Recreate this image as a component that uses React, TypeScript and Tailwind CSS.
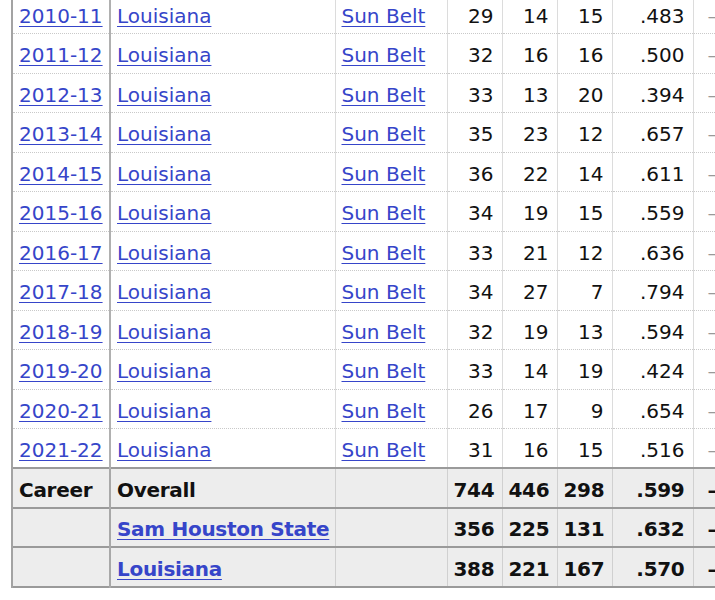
const seasons = [
  ['2010-11', 29, 14, 15, '.483'],
  ['2011-12', 32, 16, 16, '.500'],
  ['2012-13', 33, 13, 20, '.394'],
  ['2013-14', 35, 23, 12, '.657'],
  ['2014-15', 36, 22, 14, '.611'],
  ['2015-16', 34, 19, 15, '.559'],
  ['2016-17', 33, 21, 12, '.636'],
  ['2017-18', 34, 27, 7, '.794'],
  ['2018-19', 32, 19, 13, '.594'],
  ['2019-20', 33, 14, 19, '.424'],
  ['2020-21', 26, 17, 9, '.654'],
  ['2021-22', 31, 16, 15, '.516'],
] as const;

const career = [
  { label: 'Career', team: 'Overall', link: false, g: 744, w: 446, l: 298, pct: '.599' },
  { label: '', team: 'Sam Houston State', link: true, g: 356, w: 225, l: 131, pct: '.632' },
  { label: '', team: 'Louisiana', link: true, g: 388, w: 221, l: 167, pct: '.570' },
];

const link = 'text-[#3645c9] underline underline-offset-[3px] decoration-1';
const td = 'h-[39.5px] px-[6px] pt-[4px] pb-0 align-middle whitespace-nowrap';
const num = 'text-right pr-[8px]';

export default function App() {
  return (
    <div className="w-[715px] h-[600px] overflow-hidden bg-white font-['DejaVu_Sans',Verdana,sans-serif] text-[20px] text-[#111]">
      <table className="-mt-[6px] ml-[11px] table-fixed border-collapse w-[861px] leading-[24px]">
        <colgroup>
          <col className="w-[98px]" />
          <col className="w-[225px]" />
          <col className="w-[112px]" />
          <col className="w-[55px]" />
          <col className="w-[55px]" />
          <col className="w-[55px]" />
          <col className="w-[81px]" />
          <col className="w-[180px]" />
        </colgroup>
        <tbody>
          {seasons.map(([year, g, w, l, pct]) => (
            <tr key={year} className="border-b border-dotted border-[#c9c9c9]">
              <td className={`${td} border-l-2 border-l-[#a3a3a3] border-r-2 border-r-[#b0b0b0]`}>
                <a className={link}>{year}</a>
              </td>
              <td className={`${td} border-r border-r-[#dcdcdc]`}>
                <a className={link}>Louisiana</a>
              </td>
              <td className={`${td} border-r border-r-[#dcdcdc]`}>
                <a className={link}>Sun Belt</a>
              </td>
              <td className={`${td} ${num} border-r border-r-[#dcdcdc]`}>{g}</td>
              <td className={`${td} ${num} border-r border-r-[#dcdcdc]`}>{w}</td>
              <td className={`${td} ${num} border-r border-r-[#dcdcdc]`}>{l}</td>
              <td className={`${td} ${num} pr-[7px] border-r border-r-[#dcdcdc]`}>{pct}</td>
              <td className={`${td} pl-[14px] text-[#999]`}>–</td>
            </tr>
          ))}
          {career.map((r) => (
            <tr key={r.team} className="bg-[#ededed] font-bold tracking-[-0.3px] border-t-2 border-t-[#9a9a9a] border-b-2 border-b-[#9a9a9a]">
              <td className={`${td} border-l-2 border-l-[#a3a3a3] border-r-2 border-r-[#a8a8a8]`}>{r.label}</td>
              <td className={`${td} border-r border-r-[#d0d0d0]`}>
                {r.link ? <a className={link}>{r.team}</a> : r.team}
              </td>
              <td className={`${td} border-r border-r-[#d0d0d0]`}></td>
              <td className={`${td} ${num} border-r border-r-[#d0d0d0]`}>{r.g}</td>
              <td className={`${td} ${num} border-r border-r-[#d0d0d0]`}>{r.w}</td>
              <td className={`${td} ${num} border-r border-r-[#d0d0d0]`}>{r.l}</td>
              <td className={`${td} ${num} pr-[7px] border-r border-r-[#d0d0d0]`}>{r.pct}</td>
              <td className={`${td} pl-[14px]`}>–</td>
            </tr>
          ))}
        </tbody>
      </table>
    </div>
  );
}
